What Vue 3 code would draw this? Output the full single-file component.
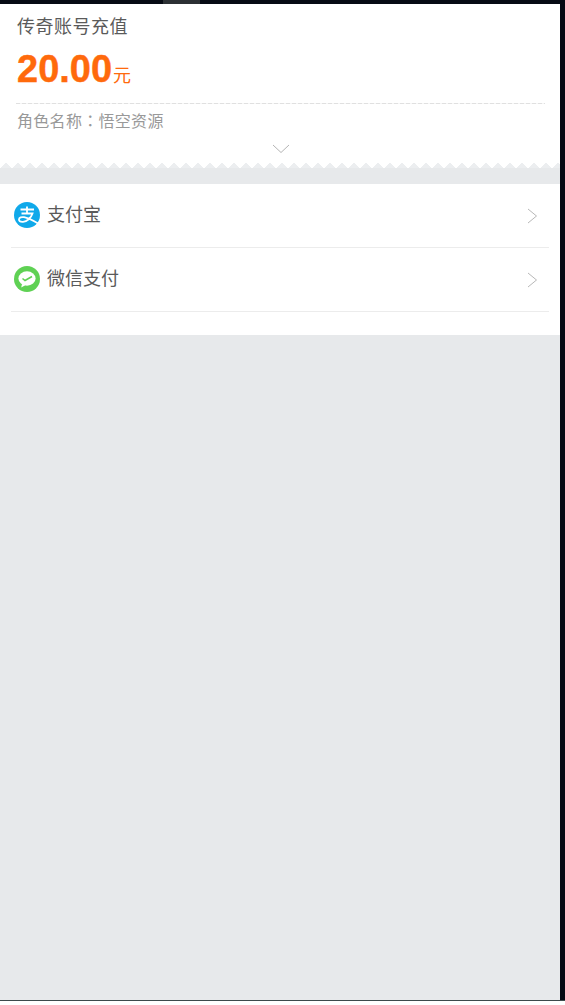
<script setup>
const methods = [
  { name: '支付宝', type: 'alipay' },
  { name: '微信支付', type: 'wechat' }
]
</script>

<template>
  <div class="screen">
    <div class="topbar"><span class="tab"></span></div>
    <div class="body">
      <main class="page">
        <section class="order">
          <div class="title">传奇账号充值</div>
          <div class="amount"><span class="num">20.00</span><span class="unit">元</span></div>
          <div class="dash"></div>
          <div class="role">角色名称<span class="colon">：</span>悟空资源</div>
          <div class="toggle">
            <svg width="18" height="10" viewBox="0 0 18 10"><path d="M1 1l8 7.500L17 1" fill="none" stroke="#b4b4b4" stroke-width="1"/></svg>
          </div>
          <div class="teeth"></div>
        </section>
        <section class="list">
          <div v-for="m in methods" :key="m.name" class="row">
            <svg v-if="m.type === 'alipay'" class="icon" viewBox="0 0 26 26">
              <circle cx="13" cy="13" r="13" fill="#10a9ea"/>
              <path d="M6.500 7.500H20M13 4.500v7M7.500 11.500h11C17 16 13 19.500 9 19.800 6 20 4.800 18.800 5 17.300c.2-1.800 2.500-2.500 5-2.100 4 .6 9 3.300 15 6.800" fill="none" stroke="#fff" stroke-width="1.800"/>
            </svg>
            <svg v-else class="icon" viewBox="0 0 26 26">
              <circle cx="13" cy="13" r="13" fill="#5fd154"/>
              <ellipse cx="13" cy="12.500" rx="8.600" ry="7.200" fill="#fff"/>
              <path d="M8 18l-.8 3.500 5-2.800z" fill="#fff"/>
              <path d="M8.500 12.500l2.500 2L18 10.500" fill="none" stroke="#5fd154" stroke-width="1.600"/>
            </svg>
            <span class="name">{{ m.name }}</span>
            <svg class="chev" width="11" height="16" viewBox="0 0 11 16"><path d="M1 1l8.500 7L1 15" fill="none" stroke="#b8b8b8" stroke-width="1"/></svg>
          </div>
        </section>
      </main>
      <div class="rail"></div>
    </div>
    <div class="bottom"></div>
  </div>
</template>

<style>
html, body { margin: 0; background: #fff; }
</style>

<style scoped>
.screen {
  width: 565px;
  height: 1005px;
  display: flex;
  flex-direction: column;
  font-family: "Liberation Sans", "Noto Sans CJK SC", sans-serif;
  overflow: hidden;
}
.topbar { height: 4px; background: #060a14; flex: none; padding-left: 163px; }
.tab { display: block; width: 37px; height: 4px; background: #2c3034; }
.body { height: 996px; flex: none; display: flex; }
.page { width: 560px; flex: none; background: #e7e9eb; }
.rail { flex: 1; background: #060a14; }
.bottom { height: 1px; background: #3c4a4c; flex: none; }

.order { position: relative; height: 164px; background: #fff; padding: 0 15px 0 17px; box-sizing: border-box; }
.title { padding-top: 13px; font-size: 18px; line-height: 20px; color: #5a5a5a; letter-spacing: 0.5px; }
.amount { margin-top: 9px; height: 46px; display: flex; align-items: baseline; color: #ff6a0c; }
.num { font-size: 38px; font-weight: 700; line-height: 46px; -webkit-text-stroke: 0.4px #ff6a0c; }
.unit { font-size: 18px; margin-left: 1px; }
.dash {
  margin-top: 11px;
  margin-left: -1px;
  height: 1px;
  background: repeating-linear-gradient(90deg, #e0e0e0 0 4px, #f6f6f6 4px 6px);
}
.role { margin-top: 6px; font-size: 16px; line-height: 20px; color: #999; letter-spacing: 0.3px; }
.colon { font-family: "Noto Sans CJK TC", sans-serif; }
.toggle { position: absolute; left: 272px; top: 140px; line-height: 0; }
.teeth {
  position: absolute;
  left: 0;
  right: 0;
  bottom: 0;
  height: 5px;
  background: conic-gradient(from 129.8deg at 50% 0, #eceef0 0 100.4deg, transparent 0) 0 0 / 12px 5px repeat-x;
}

.list { margin-top: 16px; height: 151px; background: #fff; padding: 0 11px; box-sizing: border-box; }
.row { height: 64px; display: flex; align-items: center; box-sizing: border-box; border-bottom: 1px solid #ececec; }
.icon { width: 26px; height: 26px; margin-left: 3px; margin-bottom: 1px; flex: none; }
.name { margin-left: 7px; margin-bottom: 6px; font-size: 18px; color: #5a5a5a; }
.chev { margin-left: auto; margin-right: 11px; }
</style>
